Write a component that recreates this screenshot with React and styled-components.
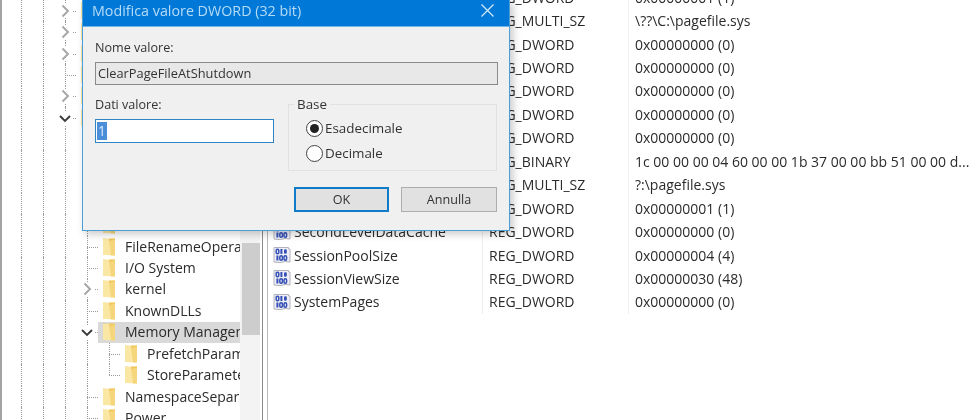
import React from 'react';
import styled, { createGlobalStyle } from 'styled-components';

const Global = createGlobalStyle`
  html, body { margin: 0; padding: 0; background: #fff; }
  body { width: 980px; height: 420px; overflow: hidden; font-family: "Open Sans", "Noto Sans", sans-serif; }
`;

const Desktop = styled.div`
  position: relative;
  display: flex;
  width: 980px;
  height: 420px;
  overflow: hidden;
  background: #fff;
  color: #2b2b2b;
  filter: blur(0.35px);
`;

const TreePane = styled.div`
  display: flex;
  width: 263px;
  height: 420px;
  flex: none;
  box-sizing: border-box;
  border-left: 2px solid #a3a3a3;
  border-right: 1px solid #8c8c8c;
`;
const TreeRows = styled.div`
  width: 238px;
  flex: none;
  overflow: hidden;
  padding-left: 8px;
  box-sizing: border-box;
`;
const TreeRow = styled.div`
  display: flex;
  align-items: center;
  height: 21.45px;
  width: 400px;
`;
const Cell = styled.span`
  position: relative;
  display: flex;
  align-items: center;
  justify-content: center;
  width: 22px;
  height: 100%;
  flex: none;
  &::before {
    content: "";
    display: ${p => (p.$v ? 'block' : 'none')};
    position: absolute;
    left: 10.5px;
    top: 0;
    height: ${p => (p.$v === 'half' ? '50%' : '100%')};
    border-left: 1px dotted #9a9a9a;
  }
  &::after {
    content: "";
    display: ${p => (p.$h ? 'block' : 'none')};
    position: absolute;
    left: 11px;
    top: 50%;
    width: 11px;
    border-top: 1px dotted #9a9a9a;
  }
`;
const Entry = styled.span`
  display: flex;
  align-items: center;
  height: 100%;
  width: 142px;
  flex: none;
  overflow: hidden;
  white-space: nowrap;
  background: ${p => (p.$active ? '#d9d9d9' : 'transparent')};
`;
const FolderGlyph = styled.svg`
  width: 12px;
  height: 18px;
  flex: none;
  margin: 0 10px 0 5px;
`;
const TreeLabel = styled.span`
  font-size: 14px;
  line-height: 20px;
`;
const ChevronGlyph = styled.svg`
  position: relative;
  z-index: 1;
  width: 14px;
  height: 14px;
  background: #fff;
`;
const Scrollbar = styled.div`
  width: 20px;
  flex: none;
  background: #f3f3f3;
  padding: 243px 0 0 2px;
  box-sizing: border-box;
`;
const Thumb = styled.div`
  height: 92px;
  background: #cdcdcd;
`;
const Splitter = styled.div`
  width: 4px;
  flex: none;
  background: #fff;
`;
const ListPane = styled.div`
  flex: 1;
  min-width: 0;
  height: 420px;
  overflow: hidden;
  border-left: 1px solid #b9b9b9;
`;
const ListRows = styled.div`
  margin-top: -14.5px;
`;
const ListRow = styled.div`
  display: grid;
  grid-template-columns: 215px 146px 1fr;
  height: 23.44px;
  align-items: center;
  font-size: 14px;
  white-space: nowrap;
`;
const NameCell = styled.span`
  display: flex;
  align-items: center;
  gap: 3px;
  padding-left: 5px;
  border-right: 1px solid #efefef;
  height: 100%;
`;
const TypeCell = styled.span`
  display: flex;
  align-items: center;
  padding-left: 6px;
  border-right: 1px solid #efefef;
  height: 100%;
`;
const ValueCell = styled.span`
  padding-left: 6px;
`;
const RegGlyph = styled.svg`
  width: 18px;
  height: 18px;
  flex: none;
`;

const Dialog = styled.div`
  position: absolute;
  left: 82px;
  top: 0;
  width: 428px;
  height: 231px;
  box-sizing: border-box;
  border: 1px solid #4b9fd6;
  border-top: none;
  background: #f0f0f0;
  box-shadow: 3px 3px 8px rgba(0, 0, 0, 0.22);
  display: flex;
  flex-direction: column;
`;
const TitleBar = styled.div`
  display: flex;
  align-items: center;
  justify-content: space-between;
  height: 27px;
  flex: none;
  background: #0078d7;
  border-bottom: 1px solid #6fb6e6;
  padding: 0 15px 6px 9px;
  box-sizing: border-box;
  color: #b5dcf7;
  font-size: 14.3px;
`;
const CloseGlyph = styled.svg`
  width: 13px;
  height: 13px;
  flex: none;
`;
const DialogBody = styled.div`
  display: grid;
  grid-template-columns: 179px 1fr;
  column-gap: 14px;
  align-content: start;
  padding: 11px 12px 0 12px;
  color: #333;
  font-size: 12.6px;
`;
const FieldLabel = styled.label`
  display: block;
  height: 24px;
  line-height: 20px;
`;
const NameField = styled.div`
  grid-column: 1 / -1;
  margin-bottom: 10px;
`;
const ReadonlyBox = styled.div`
  width: 403px;
  height: 23px;
  box-sizing: border-box;
  border: 1px solid #8a8a8a;
  background: #e8e8e8;
  font-size: 12.8px;
  line-height: 21px;
  padding-left: 2px;
  color: #333;
`;
const DataBox = styled.div`
  height: 24px;
  box-sizing: border-box;
  border: 1px solid #2f86c6;
  background: #fff;
  padding: 2px 0 0 1px;
`;
const Selected = styled.span`
  display: inline-block;
  height: 18px;
  line-height: 18px;
  padding: 0 1px;
  background: #4a8fd8;
  color: #dcecff;
  font-size: 13.6px;
`;
const BaseGroup = styled.div`
  position: relative;
  margin: 9px 0 0;
  height: 67px;
  box-sizing: border-box;
  border: 1px solid #e1e1e1;
  padding: 14px 0 0 17px;
  display: flex;
  flex-direction: column;
  gap: 7px;
  font-size: 13.4px;
`;
const Legend = styled.span`
  position: absolute;
  left: 5px;
  top: -11px;
  padding: 0 3px;
  background: #f0f0f0;
  line-height: 20px;
`;
const RadioRow = styled.span`
  display: flex;
  align-items: center;
  gap: 2px;
  height: 18px;
`;
const Radio = styled.span`
  width: 15px;
  height: 15px;
  border-radius: 50%;
  border: 1px solid #444;
  background: #fff;
  display: flex;
  align-items: center;
  justify-content: center;
  &::after {
    content: "";
    display: ${p => (p.$on ? 'block' : 'none')};
    width: 9px;
    height: 9px;
    border-radius: 50%;
    background: #222;
  }
`;
const LeftStack = styled.div``;
const ButtonRow = styled.div`
  grid-column: 1 / -1;
  display: flex;
  justify-content: flex-end;
  gap: 12px;
  margin-top: 16px;
`;
const Button = styled.button`
  width: ${p => (p.$primary ? '95px' : '96px')};
  height: 25px;
  box-sizing: border-box;
  border: ${p => (p.$primary ? '2px solid #0f7cc9' : '1px solid #adadad')};
  background: #e1e1e1;
  color: #333;
  font: inherit;
  padding: 0;
`;

const Folder = () => (
  <FolderGlyph viewBox="0 0 12 18">
    <path d="M0 1 L12 0.5 L12 17.5 L0 17 Z" fill="#fbe7a4" />
    <path d="M0 1 L6 0.5 L6 3 L12 2.5 L12 1 L12 0.5 L0 0.5 Z" fill="#f0c85c" />
    <path d="M6 3 L12 2.5 L12 17.5 L8 17.5 Z" fill="#f6d67c" />
  </FolderGlyph>
);

const Chevron = ({ open }) => (
  <ChevronGlyph viewBox="0 0 14 14">
    <path
      d={open ? 'M2 5 L7 10 L12 5' : 'M4.5 1.5 L10 7 L4.5 12.5'}
      fill="none"
      stroke={open ? '#3a3a3a' : '#a6a6a6'}
      strokeWidth="1.9"
    />
  </ChevronGlyph>
);

const RegIcon = () => (
  <RegGlyph viewBox="0 0 18 18">
    <path d="M1 1.5 H15.5 V3 H17 V16 L12 15.5 Q8 17.5 1 16 Z" fill="#eeeef8" stroke="#b2b2bc" strokeWidth="1" />
    <rect x="3.2" y="3.2" width="2.6" height="4.6" rx="1.2" fill="none" stroke="#3550b4" strokeWidth="1.5" />
    <rect x="7.4" y="3" width="2" height="5" fill="#3550b4" />
    <rect x="11" y="3.2" width="2.8" height="4.6" rx="1.2" fill="#3550b4" />
    <rect x="3.4" y="9.5" width="2" height="5" fill="#3550b4" />
    <rect x="6.8" y="9.7" width="2.6" height="4.6" rx="1.2" fill="none" stroke="#3550b4" strokeWidth="1.5" />
    <rect x="11" y="9.7" width="2.6" height="4.6" rx="1.2" fill="none" stroke="#3550b4" strokeWidth="1.5" />
  </RegGlyph>
);

const upper = [
  ['chev', 'Lsa'], ['chev', 'LsaExtensionConfig'], ['chev', 'LsaInformation'],
  ['tee', 'ManufacturingMode'], ['chev', 'MediaCategories'], ['open', 'Session Manager'],
];
const lower = [
  ['tee', 'AppCompatCache'], ['tee', 'Configuration Manager'], ['tee', 'DOS Devices'],
  ['tee', 'Environment'], ['tee', 'Executive'], ['tee', 'FileRenameOperations'],
  ['tee', 'I/O System'], ['chev', 'kernel'], ['tee', 'KnownDLLs'],
  ['open', 'Memory Management', true],
];

const values = [
  ['DisablePagingExecutive', 'REG_DWORD', '0x00000001 (1)'],
  ['ExistingPageFiles', 'REG_MULTI_SZ', '\\??\\C:\\pagefile.sys'],
  ['FeatureSettingsOverride', 'REG_DWORD', '0x00000000 (0)'],
  ['FeatureSettingsOverrideMask', 'REG_DWORD', '0x00000000 (0)'],
  ['IoPageLockLimit', 'REG_DWORD', '0x00000000 (0)'],
  ['LargeSystemCache', 'REG_DWORD', '0x00000000 (0)'],
  ['NonPagedPoolSize', 'REG_DWORD', '0x00000000 (0)'],
  ['PagefileUsage', 'REG_BINARY', '1c 00 00 00 04 60 00 00 1b 37 00 00 bb 51 00 00 d...'],
  ['PagingFiles', 'REG_MULTI_SZ', '?:\\pagefile.sys'],
  ['PhysicalAddressExtension', 'REG_DWORD', '0x00000001 (1)'],
  ['SecondLevelDataCache', 'REG_DWORD', '0x00000000 (0)'],
  ['SessionPoolSize', 'REG_DWORD', '0x00000004 (4)'],
  ['SessionViewSize', 'REG_DWORD', '0x00000030 (48)'],
  ['SystemPages', 'REG_DWORD', '0x00000000 (0)'],
];

const Node = ({ kind }) =>
  kind === 'tee' ? <Cell $v $h /> : (
    <Cell $v $h>
      <Chevron open={kind === 'open'} />
    </Cell>
  );

export default function App() {
  return (
    <Desktop>
      <Global />
      <TreePane>
        <TreeRows>
          {upper.map(([kind, name]) => (
            <TreeRow key={name}>
              <Cell $v /><Cell $v />
              <Node kind={kind} />
              <Entry><Folder /><TreeLabel>{name}</TreeLabel></Entry>
            </TreeRow>
          ))}
          {lower.map(([kind, name, active]) => (
            <TreeRow key={name}>
              <Cell $v /><Cell $v /><Cell $v />
              <Node kind={kind} />
              <Entry $active={active}><Folder /><TreeLabel>{name}</TreeLabel></Entry>
            </TreeRow>
          ))}
          {['PrefetchParameters', 'StoreParameters'].map(name => (
            <TreeRow key={name}>
              <Cell $v /><Cell $v /><Cell $v /><Cell $v />
              <Cell $v={name === 'StoreParameters' ? 'half' : true} $h />
              <Entry><Folder /><TreeLabel>{name}</TreeLabel></Entry>
            </TreeRow>
          ))}
          {['NamespaceSeparation', 'Power'].map(name => (
            <TreeRow key={name}>
              <Cell $v /><Cell $v /><Cell $v />
              <Cell $v $h />
              <Entry><Folder /><TreeLabel>{name}</TreeLabel></Entry>
            </TreeRow>
          ))}
        </TreeRows>
        <Scrollbar><Thumb /></Scrollbar>
      </TreePane>
      <Splitter />
      <ListPane>
        <ListRows>
          {values.map(([name, type, value]) => (
            <ListRow key={name}>
              <NameCell><RegIcon />{name}</NameCell>
              <TypeCell>{type}</TypeCell>
              <ValueCell>{value}</ValueCell>
            </ListRow>
          ))}
        </ListRows>
      </ListPane>
      <Dialog>
        <TitleBar>
          <span>Modifica valore DWORD (32 bit)</span>
          <CloseGlyph viewBox="0 0 13 13">
            <path d="M0.5 0.5 L12.5 12.5 M12.5 0.5 L0.5 12.5" stroke="#d5ebfa" strokeWidth="1.2" fill="none" />
          </CloseGlyph>
        </TitleBar>
        <DialogBody>
          <NameField>
            <FieldLabel>Nome valore:</FieldLabel>
            <ReadonlyBox>ClearPageFileAtShutdown</ReadonlyBox>
          </NameField>
          <LeftStack>
            <FieldLabel>Dati valore:</FieldLabel>
            <DataBox><Selected>1</Selected></DataBox>
          </LeftStack>
          <BaseGroup>
            <Legend>Base</Legend>
            <RadioRow><Radio $on />Esadecimale</RadioRow>
            <RadioRow><Radio />Decimale</RadioRow>
          </BaseGroup>
          <ButtonRow>
            <Button $primary>OK</Button>
            <Button>Annulla</Button>
          </ButtonRow>
        </DialogBody>
      </Dialog>
    </Desktop>
  );
}
